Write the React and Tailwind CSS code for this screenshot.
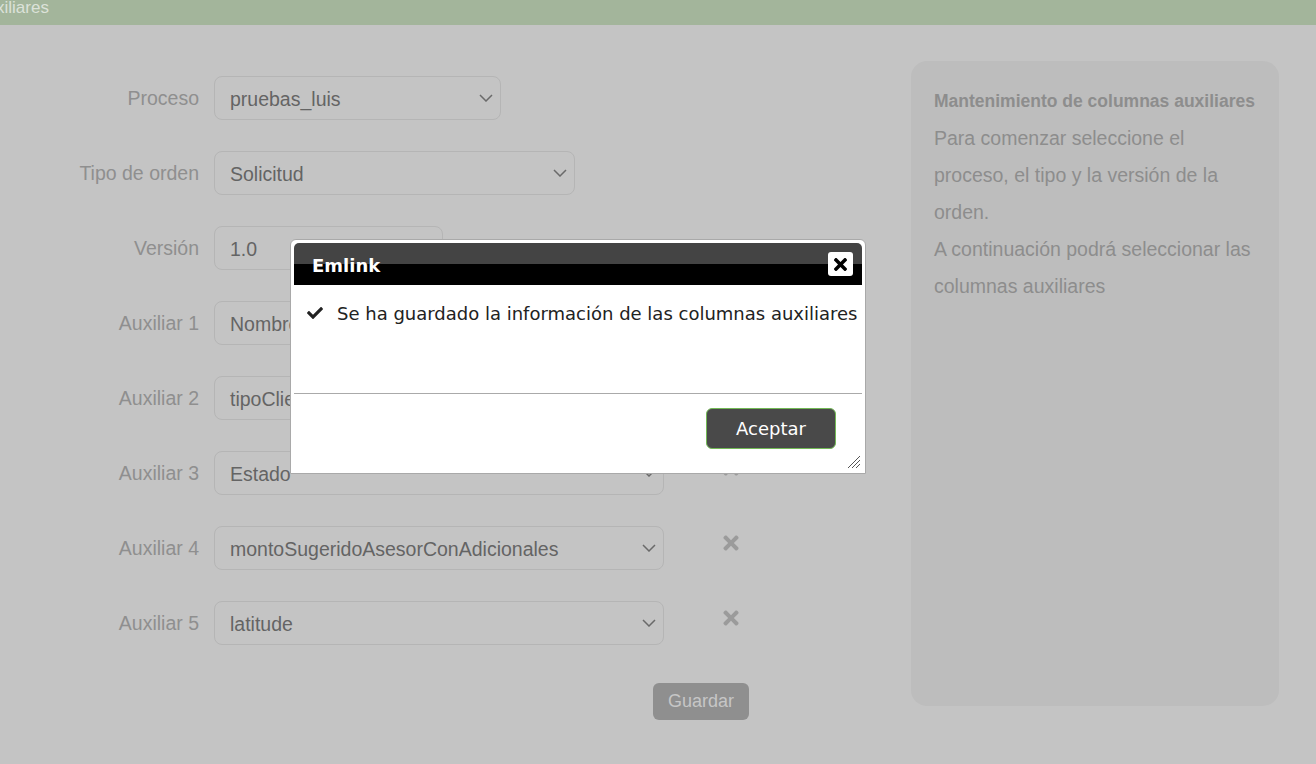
import { FaTimes, FaCheck } from 'react-icons/fa'

const rows = [
  { label: 'Proceso', value: 'pruebas_luis', w: 'w-[287px]' },
  { label: 'Tipo de orden', value: 'Solicitud', w: 'w-[361px]' },
  { label: 'Versión', value: '1.0', w: 'w-[229px]' },
  { label: 'Auxiliar 1', value: 'NombreCliente', w: 'w-[450px]', remove: true },
  { label: 'Auxiliar 2', value: 'tipoCliente', w: 'w-[450px]', remove: true },
  { label: 'Auxiliar 3', value: 'Estado', w: 'w-[450px]', remove: true },
  { label: 'Auxiliar 4', value: 'montoSugeridoAsesorConAdicionales', w: 'w-[450px]', remove: true },
  { label: 'Auxiliar 5', value: 'latitude', w: 'w-[450px]', remove: true },
]

function Chevron() {
  return (
    <svg width="14" height="8" viewBox="0 0 14 8" className="shrink-0">
      <polyline points="1,1 7,7 13,1" fill="none" stroke="#6a6a6a" strokeWidth="1.5" />
    </svg>
  )
}

function FormRow({ row }) {
  return (
    <div className="flex items-start h-[44px]">
      <div className="w-[174px] pr-[15px] text-right leading-[44px] text-[19.5px] text-[#8f8f8f]">
        {row.label}
      </div>
      <div className={`${row.w} h-[44px] flex items-center justify-between pl-[15px] pr-[7px] border border-[#b5b5b5] rounded-[8px] text-[19.5px] text-[#646464]`}>
        <span className="pt-[4px]">{row.value}</span>
        <Chevron />
      </div>
      {row.remove && (
        <div className="ml-[56px] mt-[6px] text-[#9b9b9b]">
          <FaTimes size={22} />
        </div>
      )}
    </div>
  )
}

function Dialog() {
  return (
    <div className="absolute left-[290px] top-[239px] w-[576px] h-[235px] bg-white border border-[#a9a9a9] rounded-t-[6px] p-[3px] flex flex-col font-['DejaVu_Sans',sans-serif]">
      {/* title bar */}
      <div className="relative h-[42px] rounded-t-[5px] overflow-hidden flex items-center pl-[18px] pr-[9px]"
        style={{ background: 'linear-gradient(#444444 0, #444444 50%, #000000 50%, #000000 100%)' }}>
        <span className="text-white font-bold text-[18px] mt-[2px]">Emlink</span>
        <div className="ml-auto w-[25px] h-[24px] bg-white rounded-[3px] flex items-center justify-center text-black">
          <FaTimes size={19} />
        </div>
      </div>
      {/* content */}
      <div className="h-[108px] pl-[13px] pt-[15px] flex items-start gap-[14px] text-[18px] text-[#222]">
        <FaCheck size={16} className="mt-[5px] shrink-0" />
        <span className="whitespace-nowrap">Se ha guardado la información de las columnas auxiliares</span>
      </div>
      {/* buttons */}
      <div className="relative flex-1 border-t border-[#aaa] flex justify-end items-start pr-[26px] pt-[14px]">
        <button className="w-[130px] h-[41px] bg-[#494949] border border-[#72b955] rounded-[6px] text-white text-[18px]">
          Aceptar
        </button>
        <svg width="16" height="16" viewBox="0 0 16 16" className="absolute right-[1px] bottom-[1px]">
          <line x1="15" y1="3" x2="3" y2="15" stroke="#555" strokeWidth="1" />
          <line x1="15" y1="7" x2="7" y2="15" stroke="#555" strokeWidth="1" />
          <line x1="15" y1="11" x2="11" y2="15" stroke="#555" strokeWidth="1" />
        </svg>
      </div>
    </div>
  )
}

export default function App() {
  return (
    <div className="relative w-full h-[764px] overflow-hidden bg-[#c4c4c4] font-['Liberation_Sans',Arial,sans-serif]">
      <div className="h-[25px] bg-[#a3b59b] overflow-hidden">
        <div className="ml-[-4px] text-[17px] leading-[16px] text-[#dce2d9]">xiliares</div>
      </div>

      <div className="flex pl-[40px] pr-[37px] pt-[36px]">
        {/* form */}
        <div className="pt-[15px] flex flex-col gap-[31px]">
          {rows.map(r => <FormRow key={r.label} row={r} />)}
          <div className="pl-[613px] mt-[7px]">
            <button className="w-[96px] h-[37px] bg-[#8f8f8f] rounded-[6px] text-[18px] text-[#c6c6c6]">
              Guardar
            </button>
          </div>
        </div>

        {/* help panel */}
        <div className="ml-auto w-[368px] h-[645px] bg-[#bdbdbd] rounded-[16px] px-[23px] pt-[22px] text-[#8d8d8d] leading-[37px]">
          <div className="font-bold text-[17.5px] whitespace-nowrap">Mantenimiento de columnas auxiliares</div>
          <div className="text-[19.5px]">
            Para comenzar seleccione el proceso, el tipo y la versión de la orden.
          </div>
          <div className="text-[19.5px]">
            A continuación podrá seleccionar las columnas auxiliares
          </div>
        </div>
      </div>

      <Dialog />
    </div>
  )
}
